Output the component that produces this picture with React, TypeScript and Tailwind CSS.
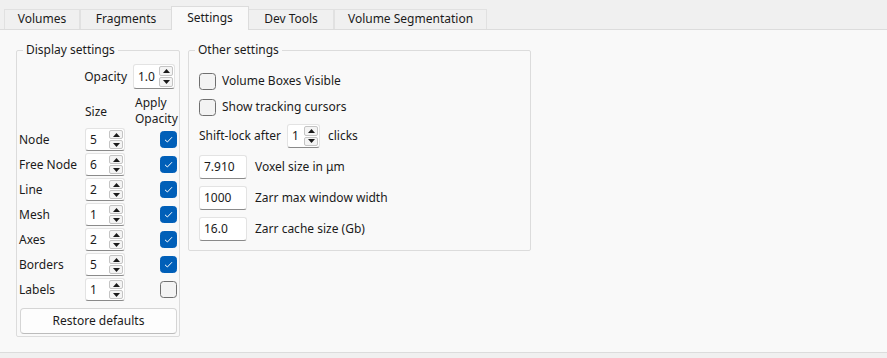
import React from "react";

const font = { fontFamily: '"Noto Sans", "Liberation Sans", sans-serif' };

function Arrow({ up }: { up?: boolean }) {
  return (
    <div className="flex-1 flex items-center justify-center bg-[#f4f4f4] border border-[#c4c4c4] rounded-[2px]">
      <svg width="7" height="4" viewBox="0 0 7 4">
        {up ? <path d="M0 4 L3.5 0 L7 4 Z" fill="#1a1a1a" /> : <path d="M0 0 L3.5 4 L7 0 Z" fill="#1a1a1a" />}
      </svg>
    </div>
  );
}

function SpinBox({ value, className }: { value: string; className: string }) {
  return (
    <div className={`flex bg-white border border-[#e3e3e3] border-b-[#8a8a8a] rounded-[3px] ${className}`}>
      <span className="flex-1 pl-[4px] self-center">{value}</span>
      <div className="flex flex-col w-[15px] py-[1px] pr-[1px] gap-[1px]">
        <Arrow up />
        <Arrow />
      </div>
    </div>
  );
}

function Check({ checked }: { checked?: boolean }) {
  return checked ? (
    <svg width="17" height="17" viewBox="0 0 17 17">
      <rect x="0.5" y="0.5" width="16" height="16" rx="3" fill="#005fb8" stroke="#005fb8" />
      <path d="M5 8.8 L7.4 11 L12 6.2" fill="none" stroke="white" strokeWidth="1" />
    </svg>
  ) : (
    <svg width="17" height="17" viewBox="0 0 17 17">
      <rect x="0.5" y="0.5" width="16" height="16" rx="3" fill="#f3f3f3" stroke="#6f6f6f" />
    </svg>
  );
}

function LineEdit({ value }: { value: string }) {
  return (
    <div className="w-[48px] h-[24px] flex items-center pl-[4px] bg-white border border-[#e3e3e3] border-b-[#8a8a8a] rounded-[3px]">
      {value}
    </div>
  );
}

const tabs = ["Volumes", "Fragments", "Settings", "Dev Tools", "Volume Segmentation"];
const tabWidths = ["w-[76px]", "w-[91px]", "w-[78px]", "w-[85px]", "w-[153px]"];

const rows: [string, string, boolean][] = [
  ["Node", "5", true],
  ["Free Node", "6", true],
  ["Line", "2", true],
  ["Mesh", "1", true],
  ["Axes", "2", true],
  ["Borders", "5", true],
  ["Labels", "1", false],
];

export default function App() {
  return (
    <div style={font} className="w-[887px] h-[358px] bg-[#f0f0f0] text-[12px] text-[#1b1b1b] flex flex-col">
      {/* tabs */}
      <div className="flex items-end h-[29px] pl-[4px]">
        {tabs.map((t, i) =>
          i === 2 ? (
            <div key={t} className={`${tabWidths[i]} h-[24px] pb-[2px] relative -mb-px z-10 flex items-center justify-center bg-[#f9f9f9] border border-b-0 border-[#dcdcdc]`}>
              {t}
            </div>
          ) : (
            <div key={t} className={`${tabWidths[i]} h-[20px] pb-px flex items-center justify-center bg-[#f0f0f0] border border-b-0 border-[#e1e1e1] ${i === 3 ? "border-l-0" : ""} ${i === 1 ? "border-r-0" : ""}`}>
              {t}
            </div>
          )
        )}
      </div>

      {/* panel */}
      <div className="h-[324px] bg-[#f9f9f9] border-t border-b border-[#dcdcdc] flex items-start gap-[8px] pl-[16px] pt-[12px]">
        {/* Display settings */}
        <fieldset className="w-[164px] min-w-0 border border-[#dcdcdc] rounded-[2px] px-[2px] pb-[2px]">
          <legend className="ml-[4px] px-[3px] leading-[16px]">Display settings</legend>
          <div className="flex justify-end items-center gap-[6px] mt-[6px] pr-[2px]">
            <span>Opacity</span>
            <SpinBox value="1.0" className="w-[42px] h-[25px]" />
          </div>
          <div className="grid grid-cols-[66px_48px_1fr] mt-[6px]">
            <span />
            <span className="self-center pt-[1px] leading-[16px]">Size</span>
            <span className="pl-[2px] flex flex-col">
              <span className="leading-[16px]">Apply</span>
              <span className="leading-[16px]">Opacity</span>
            </span>
          </div>
          <div className="grid grid-cols-[66px_48px_1fr]">
            {rows.map(([label, v, c]) => (
              <React.Fragment key={label}>
                <span className="h-[25px] flex items-center">{label}</span>
                <div className="h-[25px] flex items-center">
                  <SpinBox value={v} className="w-[40px] h-[23px]" />
                </div>
                <div className="h-[25px] flex items-center justify-end">
                  <Check checked={c} />
                </div>
              </React.Fragment>
            ))}
          </div>
          <button className="mt-[6px] w-[157px] h-[26px] ml-px bg-[#fdfdfd] border border-[#d5d5d5] border-b-[#bcbcbc] rounded-[4px]">
            Restore defaults
          </button>
        </fieldset>

        {/* Other settings */}
        <fieldset className="w-[343px] min-w-0 border border-[#dcdcdc] rounded-[2px]">
          <legend className="ml-[6px] px-[3px] leading-[16px]">Other settings</legend>
          <div className="flex flex-col mt-[10px] pl-[10px] pb-[9px]">
            <label className="h-[26px] flex items-center gap-[6px]">
              <Check />
              <span>Volume Boxes Visible</span>
            </label>
            <label className="h-[26px] flex items-center gap-[6px]">
              <Check />
              <span>Show tracking cursors</span>
            </label>
            <div className="h-[26px] mt-[3px] flex items-center">
              <span>Shift-lock after</span>
              <SpinBox value="1" className="w-[33px] h-[24px] ml-[6px]" />
              <span className="ml-[8px]">clicks</span>
            </div>
            <div className="flex flex-col gap-[7px] mt-[6px]">
              {[
                ["7.910", "Voxel size in μm"],
                ["1000", "Zarr max window width"],
                ["16.0", "Zarr cache size (Gb)"],
              ].map(([v, l]) => (
                <div key={l} className="flex items-center gap-[8px]">
                  <LineEdit value={v} />
                  <span>{l}</span>
                </div>
              ))}
            </div>
          </div>
        </fieldset>
      </div>
    </div>
  );
}
